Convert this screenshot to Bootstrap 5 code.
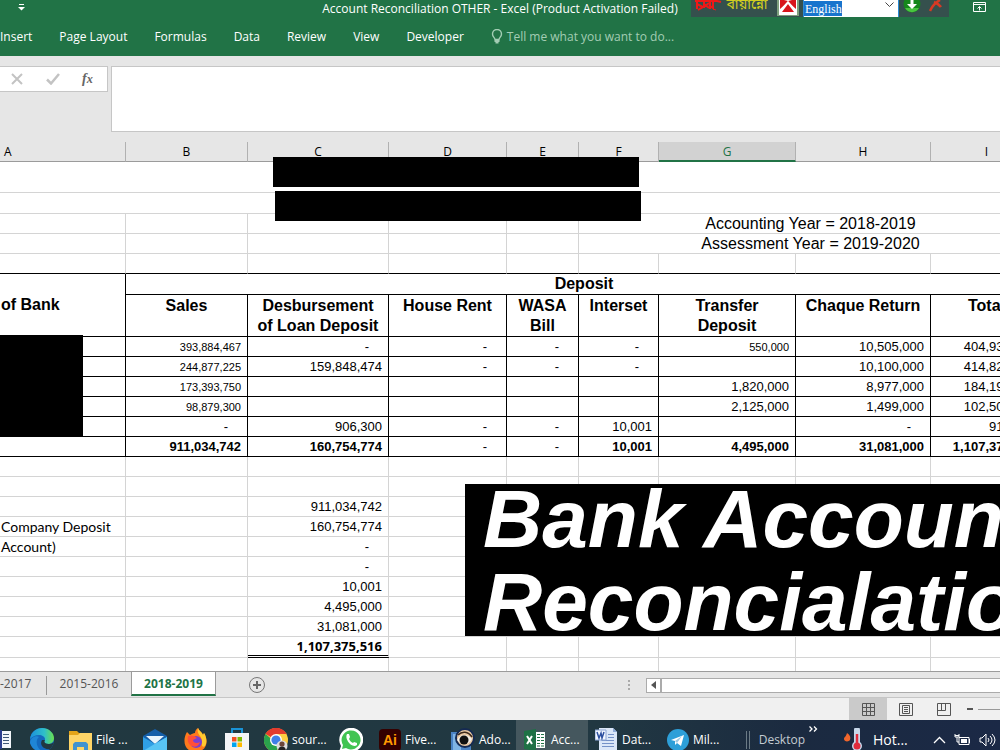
<!DOCTYPE html>
<html lang="en">
<head>
<meta charset="utf-8">
<meta name="viewport" content="width=device-width, initial-scale=1">
<title>Account Reconciliation OTHER - Excel</title>
<link href="https://cdn.jsdelivr.net/npm/bootstrap@5.3.0/dist/css/bootstrap.min.css" rel="stylesheet">
<style>
  body { font-family: "Open Sans", "Noto Sans", sans-serif; font-size: 12px; line-height: 16px; color: #000; background: #e6e6e6; }
  button { border: 0; background: none; padding: 0; color: inherit; }
  svg { display: block; flex: none; }

  /* title bar and ribbon */
  .ribbon { background: #217346; color: #fff; }
  .titlebar { height: 18px; line-height: 18px; }
  .qat { left: 18px; top: 3px; }
  .winbtn { right: 14px; top: 2px; }
  .tabs-row { height: 38px; gap: 27px; }
  .tabs-row a { color: #fff; text-decoration: none; white-space: nowrap; }
  .tabs-row a.tellme { color: #a3cdb4; }
  .langbar { right: 51px; top: 0; width: 258px; height: 17px; background: #35504d; overflow: hidden; }
  .lang-name { color: #d3cf1f; font-family: "Noto Sans Bengali", "Noto Sans", sans-serif; font-size: 14px; line-height: 12px; width: 44px; white-space: nowrap; }
  .lang-select { appearance: none; width: 96px; height: 22px; margin-top: -7px; border: 1px solid #2a8ad4; border-radius: 0; padding: 0 1px; color: #fff;
    font: 12px/18px "Liberation Serif", serif; background: linear-gradient(#1874cd, #1874cd) 0 2px / 38px 15px no-repeat #fff; }
  .lang-arrow { right: 5px; top: 2px; }

  /* formula bar */
  .formula-area { padding: 10px 0; gap: 3px; height: 86px; }
  .fx-box { width: 108px; height: 26px; background: #fff; border: 1px solid #c6c6c6; border-left: 0; padding-left: 10px; gap: 22px; }
  .fx-input { height: 66px; border: 1px solid #c6c6c6; border-right: 0; resize: none; background: #fff; }
  .fx-label { font: italic bold 14px/16px "Liberation Serif", serif; color: #666; }

  /* worksheet */
  .sheet { background: #fff; }
  .ledger { table-layout: fixed; width: 100%; min-width: 1142px; border-collapse: separate; border-spacing: 0; font-family: "Liberation Sans", Arial, sans-serif; font-size: 13px; line-height: 16px; }
  .ledger td, .ledger tbody th { border-right: 1px solid #d4d4d4; border-bottom: 1px solid #d4d4d4; padding: 0 6px; height: 20px; white-space: nowrap; overflow: hidden; }
  .ledger thead th { height: 20px; padding: 1px 0 0; background: #e6e6e6; border-right: 1px solid #b1b1b1; border-bottom: 1px solid #9b9b9b; font: 12px/16px "Open Sans", "Noto Sans", sans-serif; text-align: center; }
  .ledger thead th.picked { background: #d2d2d2; color: #217346; border-bottom: 2px solid #217346; }
  .ledger .boxed > * { border-color: #000; }
  .ledger .boxed > .outside { border-color: #d4d4d4; }
  .ledger .topline > * { border-bottom-color: #000; }
  .ledger tbody th { font-size: 16px; line-height: 20px; text-align: center; vertical-align: top; padding: 0 4px; white-space: normal; }
  .ledger tbody th.bank { text-align: left; vertical-align: middle; padding-left: 1px; }
  .ledger .r42 > th { padding-top: 1px; }
  .ledger .fine { font-size: 11px; }
  .ledger .nil { padding-right: 19px; }
  .ledger .year { font-size: 16px; line-height: 18px; padding-top: 1px; text-align: center; }
  .ledger .note { font: 14px/18px Lato, sans-serif; padding-left: 1px; }
  .ledger .grand { font: bold 13px/17px "Noto Sans", sans-serif; border-bottom: 3px double #000; }
  .ledger .r31 td { height: 31px; }
  .ledger .r21 > * { height: 21px; }
  .ledger .r42 > * { height: 42px; }
  .mask { background: #000; position: absolute; }
  .banner { left: 465px; right: 0; top: 342px; height: 152px; padding-left: 18px; color: #fff; overflow: hidden; white-space: nowrap; font: italic bold 82px/83px "Liberation Sans", Arial, sans-serif; }

  /* sheet tabs and status bar */
  .sheetbar { height: 28px; border-top: 1px solid #9b9b9b; border-bottom: 1px solid #c6c6c6; background: #e6e6e6; color: #555; }
  .sheetbar a { color: inherit; text-decoration: none; text-align: center; line-height: 24px; height: 24px; width: 84px; }
  .sheetbar a.cut { width: 46px; text-align: left; }
  .sheetbar a.on { width: 85px; background: #fff; color: #217346; font-weight: bold; border: 1px solid #9b9b9b; border-top: 0; border-bottom: 2px solid #217346; }
  .tab-sep { width: 1px; height: 19px; background: #999; }
  .hscroll { width: 354px; height: 15px; border: 1px solid #ababab; border-right: 0; background: #fff; margin-top: 6px; }
  .hscroll button { width: 15px; height: 13px; border-right: 2px solid #ababab; }
  .statusbar { height: 22px; background: #f0f0f0; }
  .statusbar button { width: 38px; height: 22px; }
  .statusbar .on { background: #cacaca; }
  .zoomer { appearance: none; width: 22px; height: 1px; background: #999; }
  .zoomer::-webkit-slider-thumb { appearance: none; width: 0; height: 0; }

  /* taskbar */
  .taskbar { height: 30px; background: linear-gradient(90deg, #213840, #213842 60%, #1b2a40 80%, #1b2946); color: #fff; overflow: hidden; }
  .taskbar button { height: 40px; display: flex; align-items: center; white-space: nowrap; flex: none; }
  .tb-icon { width: 41px; justify-content: center; }
  .tb-app { width: 72px; padding-left: 7px; gap: 4px; }
  .tb-app.on { background: #45575e; }
  .tb-desktop { color: #c5ccd2; }
  .taskbar .tb-desktop { padding-right: 4px; }
  .taskbar .tb-more { width: 34px; height: 18px; }
  .tb-weather { width: 90px; font-size: 14px; }
</style>
</head>
<body class="d-flex flex-column vh-100 overflow-hidden">

<header class="ribbon position-relative">
  <div class="titlebar text-center">
    <button class="qat position-absolute" aria-label="Customize Quick Access Toolbar">
      <svg width="7" height="8" viewBox="0 0 7 8"><path d="M1 1.500h5" stroke="#fff"/><path d="M0 4h7L3.500 7.500z" fill="#fff"/></svg>
    </button>
    Account Reconciliation OTHER - Excel (Product Activation Failed)
    <div class="langbar position-absolute d-flex align-items-start">
      <svg width="34" height="17" viewBox="0 0 34 17"><g fill="none" stroke="#f01818" stroke-width="2"><path d="M4 1h22l4 1M6 1v8M6 4l6 3-5 3M13 1v7M13 4l5 4M19 1v8M13 7l5-4M22 1v7l-4-3"/><path d="M22 9l3 1" stroke-width="1"/></g></svg>
      <span class="lang-name">বায়ান্নো</span>
      <button class="ms-2" aria-label="Keyboard layout"><svg width="22" height="17" viewBox="0 0 22 17"><path d="M0 0h22v16H0z" fill="#7da07d"/><path d="M2 0h18v15H2z" fill="#fff"/><path d="M3 0h4l4 1 4-1h4v9l-8-7-8 7z" fill="#d8151b"/><path d="M5 12l6-8 6 8z" fill="#d8151b"/><path d="M4 10l7-8 7 8" fill="none" stroke="#fff" stroke-width="1.500"/></svg></button>
      <div class="position-relative ms-1">
        <select class="lang-select" aria-label="Language"><option>English</option></select>
        <svg class="lang-arrow position-absolute" width="9" height="6" viewBox="0 0 9 6"><path d="M.5.5l4 4 4-4" fill="none" stroke="#444"/></svg>
      </div>
      <button class="ms-1" aria-label="Download"><svg width="18" height="14" viewBox="0 0 18 14"><circle cx="9" cy="4" r="8.500" fill="#16871c"/><path d="M2 8a8 8 0 0 0 14 0z" fill="#48c63e"/><path d="M7.500 0h3v4H14L9 9 4 4h3.500z" fill="#fff"/></svg></button>
      <button class="ms-2" aria-label="Close"><svg width="14" height="12" viewBox="0 0 14 12"><path d="M1 11Q4 4 11 0M5 2q5 2 7 5" fill="none" stroke="#d63a24" stroke-width="2.500"/></svg></button>
    </div>
    <button class="winbtn position-absolute" aria-label="Ribbon Display Options">
      <svg width="13" height="10" viewBox="0 0 13 10"><path d="M.5.5h12v9H.5zM.5 2.500h12M6.500 8.500v-4M4.500 6.500l2-2 2 2" fill="none" stroke="#fff"/></svg>
    </button>
  </div>
  <nav class="tabs-row d-flex align-items-center">
    <a href="#" class="ms-n1">Insert</a><a href="#">Page Layout</a><a href="#">Formulas</a><a href="#">Data</a><a href="#">Review</a><a href="#">View</a><a href="#">Developer</a>
    <a href="#" class="tellme d-flex align-items-center"><svg class="me-1" width="12" height="16" viewBox="0 0 12 16"><path d="M4 10.500C4 8.500 1.500 8 1.500 5a4.500 4.500 0 0 1 9 0c0 3-2.500 3.500-2.500 5.500z" fill="none" stroke="#a3cdb4" stroke-width="1.400"/><path d="M3.500 11h5v2h-1v1.500h-3V13h-1z" fill="#a3cdb4"/></svg>Tell me what you want to do...</a>
  </nav>
</header>

<section class="formula-area d-flex align-items-start">
  <div class="fx-box d-flex align-items-center">
    <button aria-label="Cancel"><svg width="14" height="12" viewBox="0 0 14 12"><path d="M2 1l10 10M12 1L2 11" stroke="#c3c3c3" stroke-width="2"/></svg></button>
    <button aria-label="Enter"><svg width="14" height="12" viewBox="0 0 14 12"><path d="M1 6.500l4 4L13 1" fill="none" stroke="#c3c3c3" stroke-width="2.500"/></svg></button>
    <button class="fx-label" aria-label="Insert Function">f<small>x</small></button>
  </div>
  <textarea class="fx-input flex-grow-1" aria-label="Formula"></textarea>
</section>

<main class="sheet flex-grow-1 position-relative overflow-hidden">
  <table class="ledger">
    <colgroup><col style="width:126px"><col style="width:122px"><col style="width:141px"><col style="width:118px"><col style="width:72px"><col style="width:80px"><col style="width:137px"><col style="width:135px"><col style="width:112px"><col></colgroup>
    <thead><tr><th class="text-start"><span class="ps-1 ms-n1">A</span></th><th>B</th><th>C</th><th>D</th><th>E</th><th>F</th><th class="picked">G</th><th>H</th><th>I</th><th></th></tr></thead>
    <tbody class="text-end">
      <tr class="r31"><td colspan="9"></td><td></td></tr>
      <tr class="r21"><td colspan="9"></td><td></td></tr>
      <tr><td></td><td></td><td></td><td></td><td></td><td colspan="4" class="year">Accounting Year = 2018-2019</td><td></td></tr>
      <tr><td></td><td></td><td></td><td></td><td></td><td colspan="4" class="year">Assessment Year = 2019-2020</td><td></td></tr>
      <tr class="topline"><td></td><td></td><td></td><td></td><td></td><td></td><td></td><td></td><td></td><td></td></tr>
      <tr class="boxed r21"><th rowspan="2" class="bank">of Bank</th><th colspan="8">Deposit</th><td class="outside"></td></tr>
      <tr class="boxed r42"><th>Sales</th><th>Desbursement<br>of Loan Deposit</th><th>House Rent</th><th>WASA<br>Bill</th><th>Interset</th><th>Transfer<br>Deposit</th><th>Chaque Return</th><th>Total</th><td class="outside"></td></tr>
      <tr class="boxed"><td></td><td class="fine">393,884,467</td><td class="nil">-</td><td class="nil">-</td><td class="nil">-</td><td class="nil">-</td><td class="fine">550,000</td><td>10,505,000</td><td>404,939,467</td><td class="outside"></td></tr>
      <tr class="boxed"><td></td><td class="fine">244,877,225</td><td>159,848,474</td><td class="nil">-</td><td class="nil">-</td><td class="nil">-</td><td></td><td>10,100,000</td><td>414,825,699</td><td class="outside"></td></tr>
      <tr class="boxed"><td></td><td class="fine">173,393,750</td><td></td><td></td><td></td><td></td><td>1,820,000</td><td>8,977,000</td><td>184,190,750</td><td class="outside"></td></tr>
      <tr class="boxed"><td></td><td class="fine">98,879,300</td><td></td><td></td><td></td><td></td><td>2,125,000</td><td>1,499,000</td><td>102,503,300</td><td class="outside"></td></tr>
      <tr class="boxed"><td></td><td class="nil">-</td><td>906,300</td><td class="nil">-</td><td class="nil">-</td><td>10,001</td><td></td><td class="nil">-</td><td>916,301</td><td class="outside"></td></tr>
      <tr class="boxed fw-bold"><td></td><td>911,034,742</td><td>160,754,774</td><td class="nil fw-normal">-</td><td class="nil fw-normal">-</td><td>10,001</td><td>4,495,000</td><td>31,081,000</td><td>1,107,375,516</td><td class="outside"></td></tr>
      <tr><td></td><td></td><td></td><td></td><td></td><td></td><td></td><td></td><td></td><td></td></tr>
      <tr><td></td><td></td><td></td><td></td><td></td><td></td><td></td><td></td><td></td><td></td></tr>
      <tr><td></td><td></td><td>911,034,742</td><td></td><td></td><td></td><td></td><td></td><td></td><td></td></tr>
      <tr><td class="note text-start">Company Deposit</td><td></td><td>160,754,774</td><td></td><td></td><td></td><td></td><td></td><td></td><td></td></tr>
      <tr><td class="note text-start">Account)</td><td></td><td class="nil">-</td><td></td><td></td><td></td><td></td><td></td><td></td><td></td></tr>
      <tr><td></td><td></td><td class="nil">-</td><td></td><td></td><td></td><td></td><td></td><td></td><td></td></tr>
      <tr><td></td><td></td><td>10,001</td><td></td><td></td><td></td><td></td><td></td><td></td><td></td></tr>
      <tr><td></td><td></td><td>4,495,000</td><td></td><td></td><td></td><td></td><td></td><td></td><td></td></tr>
      <tr><td></td><td></td><td>31,081,000</td><td></td><td></td><td></td><td></td><td></td><td></td><td></td></tr>
      <tr class="r21"><td></td><td></td><td class="grand">1,107,375,516</td><td></td><td></td><td></td><td></td><td></td><td></td><td></td></tr>
      <tr><td></td><td></td><td></td><td></td><td></td><td></td><td></td><td></td><td></td><td></td></tr>
    </tbody>
  </table>
  <div class="mask" style="left:273px;top:15px;width:366px;height:30px"></div>
  <div class="mask" style="left:275px;top:49px;width:366px;height:30px"></div>
  <div class="mask" style="left:0;top:193px;width:83px;height:102px"></div>
  <div class="mask banner d-flex align-items-center"><div>Bank Account<br>Reconcialation</div></div>
</main>

<div class="sheetbar d-flex align-items-start">
  <a href="#" class="cut">-2017</a>
  <span class="tab-sep mt-1"></span>
  <a href="#">2015-2016</a>
  <a href="#" class="on">2018-2019</a>
  <button class="ms-4 ps-2 pt-1" aria-label="New sheet"><svg width="18" height="18" viewBox="0 0 18 18"><circle cx="9" cy="9" r="7.500" fill="none" stroke="#777"/><path d="M9 5v8M5 9h8" stroke="#666" stroke-width="2"/></svg></button>
  <svg class="ms-auto me-3 mt-2" width="2" height="12" viewBox="0 0 2 12"><path d="M0 0h2v2H0zM0 4h2v2H0zM0 8h2v2H0z" fill="#aaa"/></svg>
  <div class="hscroll"><button class="d-flex align-items-center justify-content-center" aria-label="Scroll left"><svg width="5" height="8" viewBox="0 0 5 8"><path d="M5 0v8L0 4z" fill="#555"/></svg></button></div>
</div>

<div class="statusbar d-flex align-items-center justify-content-end">
  <button class="on d-flex align-items-center justify-content-center" aria-label="Normal view"><svg width="13" height="13" viewBox="0 0 13 13"><path d="M.5.5h12v12H.5zM4.500.5v12M8.500.5v12M.5 4.500h12M.5 8.500h12" fill="none" stroke="#555"/></svg></button>
  <button class="d-flex align-items-center justify-content-center" aria-label="Page layout view"><svg width="14" height="13" viewBox="0 0 14 13"><path d="M.5.5h13v12H.5zM3.500 2.500h7v8h-7zM5 4.500h4M5 6.500h4M5 8.500h4" fill="none" stroke="#555"/></svg></button>
  <button class="d-flex align-items-center justify-content-center" aria-label="Page break view"><svg width="14" height="13" viewBox="0 0 14 13"><path d="M.5.5h13v12H.5zM.5 7.500h8V.5M4.500.5v7" fill="none" stroke="#555"/></svg></button>
  <svg class="ms-1 me-1" width="7" height="2" viewBox="0 0 7 2"><path d="M0 0h6v2H0z" fill="#555"/></svg>
  <input type="range" class="zoomer" aria-label="Zoom">
</div>

<footer class="taskbar d-flex align-items-start">
  <button style="width:21px" aria-label="Document"><svg width="11" height="24" viewBox="0 0 11 24"><path d="M0 3h11v17H0z" fill="#f3f6fb"/><path d="M0 2h2v19H0z" fill="#2c3f8f"/><path d="M3 6.500h6M3 9.500h6M3 12.500h6M3 15.500h6" stroke="#3f5878"/></svg></button>
  <button class="tb-icon" aria-label="Edge"><svg width="24" height="24" viewBox="0 0 24 24"><defs><linearGradient id="eg"><stop stop-color="#1b8fdc"/><stop offset=".6" stop-color="#2fc0c9"/><stop offset="1" stop-color="#6be04c"/></linearGradient></defs><circle cx="12" cy="12" r="12" fill="#1469bd"/><path d="M0 11C1 4 6 0 12 0c7 0 12 5 12 10 0 4-3 6-6 6-3 0-4-1-4-2 0-1 1-1 1-3 0-2-3-4-6-4-4 0-7 2-9 4z" fill="url(#eg)"/><path d="M15 12c-1 1-1 4 4 4 2 0 4-1 5-2-1 3-2 5-4 7-6 1-11-4-8-9z" fill="#213840"/><path d="M9 9c-4 3-3 11 4 15-6 0-11-3-13-9 0-5 6-8 9-6z" fill="#1f86d6"/></svg></button>
  <button class="tb-app"><svg width="23" height="24" viewBox="0 0 23 24"><path d="M0 3h8l2 2h13v17H0z" fill="#e5a519"/><path d="M0 7h9l2-2h12v17H0z" fill="#ffd567"/><path d="M4 22v-6l2-2h11l2 2v6h-4v-3H8v3z" fill="#4293cf"/></svg>File ...</button>
  <button class="tb-icon" aria-label="Mail"><svg width="24" height="24" viewBox="0 0 24 24"><path d="M0 8l12-7 12 7v15H0z" fill="#155fa9"/><path d="M3 8h18l-9 8z" fill="#e9f5fc"/><path d="M0 9l12 7 12-7v14H0z" fill="#2f9fe5"/><path d="M0 23l15-9 9-5v14z" fill="#58c4f4"/></svg></button>
  <button class="tb-icon" aria-label="Firefox"><svg width="24" height="24" viewBox="0 0 24 24"><path d="M3 4l3 3c2-1 3-2 5-2 0-2 1-4 3-5 1 3 4 4 5 7l1-2c5 8 3 18-8 19C0 24-2 12 3 4z" fill="#ff7a1c"/><path d="M14 0c1 3 4 4 5 7l1-2c3 5 3 10 1 13-2 2-4 0-3-5 0-5-6-7-4-13z" fill="#ffca2f"/><circle cx="12" cy="14" r="6" fill="#7a3fd1"/><path d="M4 8c3-1 6-1 9 2l-4 2c0 3 4 4 7 2-1 5-7 6-10 3-2-2-3-5-2-9z" fill="#ff4e3a"/></svg></button>
  <button class="tb-icon" aria-label="Store"><svg width="24" height="24" viewBox="0 0 24 24"><path d="M7 6V1h10v5" fill="none" stroke="#1a93d6" stroke-width="2"/><path d="M0 5h24v17l-2 2H2l-2-2z" fill="#f3f4f6"/><path d="M7 9h4.500v4.500H7z" fill="#f25022"/><path d="M12.500 9H17v4.500h-4.500z" fill="#7fba00"/><path d="M7 14.500h4.500V19H7z" fill="#00a4ef"/><path d="M12.500 14.500H17V19h-4.500z" fill="#ffb900"/></svg></button>
  <button class="tb-app"><svg width="24" height="24" viewBox="0 0 24 24"><circle cx="12" cy="12" r="12" fill="#ffcd41"/><path d="M12 12L1.600 6A12 12 0 0 1 22.400 6z" fill="#e33b2e"/><path d="M1.600 6A12 12 0 0 0 12 24l5-9h-5z" fill="#2aa24c"/><path d="M12 6h10.400L17 15z" fill="#ffcd41"/><path d="M1.600 6A12 12 0 0 1 22.400 6H12z" fill="#e33b2e"/><circle cx="12" cy="12" r="6" fill="#fff"/><circle cx="12" cy="12" r="4.600" fill="#3f7fe8"/><circle cx="18" cy="18" r="5.500" fill="#ddd"/><circle cx="18" cy="16" r="2.600" fill="#6b4538"/><path d="M14 23c0-6 8-6 8 0z" fill="#222"/></svg>sour...</button>
  <button class="tb-icon" style="width:43px" aria-label="WhatsApp"><svg width="24" height="24" viewBox="0 0 24 24"><path d="M0 24l2-6A12 12 0 1 1 6 22z" fill="#fff"/><path d="M3 21l1-4A9.500 9.500 0 1 1 7 20z" fill="#41c452"/><path d="M8 6l2 0 1 3-1 2c1 2 2 3 4 4l1-1 3 1v2c-5 4-13-6-10-11z" fill="#fff"/></svg></button>
  <button class="tb-app"><svg width="22" height="22" viewBox="0 0 22 22"><rect width="22" height="22" rx="4" fill="#330000"/><text x="4" y="16" font-family="Liberation Sans" font-weight="bold" font-size="14" fill="#ff9a00">Ai</text></svg>Five...</button>
  <button class="tb-app"><svg width="24" height="24" viewBox="0 0 24 24"><path d="M0 4h20v20H0z" fill="#4b83c4"/><path d="M2 6h8v18H2z" fill="#7fb4e4"/><circle cx="14" cy="10" r="9" fill="#e9c9a4" stroke="#152a52" stroke-width="2"/><path d="M6 12c3-6 10-7 15-1-3 6-10 7-15 1z" fill="#f4f0e8"/><circle cx="13" cy="12" r="4.500" fill="#111"/><path d="M7 7c4-4 10-4 14 2" fill="none" stroke="#3d2a1c" stroke-width="1.500"/></svg>Ado...</button>
  <button class="tb-app on"><svg width="24" height="22" viewBox="0 0 24 22"><path d="M13 3h9v16h-9z" fill="#fff"/><path d="M14 5.500h3M18 5.500h3M14 8.500h3M18 8.500h3M14 11.500h3M18 11.500h3M14 14.500h3M18 14.500h3M14 17h3M18 17h3" stroke="#217346"/><path d="M1 2l12-2v22L1 20z" fill="#1e7145"/><path d="M4 7l5 8M9 7l-5 8" stroke="#fff" stroke-width="2"/></svg>Acc...</button>
  <button class="tb-app"><svg width="23" height="24" viewBox="0 0 23 24"><path d="M4 0h14l4 4v20H4z" fill="#dbe7f8"/><path d="M18 0v4h4z" fill="#8eabd8"/><path d="M7 12.500h12M7 15.500h12M7 18.500h12M13 6.500h6M13 9.500h6" stroke="#7592c8"/><path d="M0 2h11v10H0z" fill="#f3f7ff" stroke="#8ba4d3"/><path d="M2 4l2 6 2-5 1 5 2-6" fill="none" stroke="#2d50a0" stroke-width="1.500"/></svg>Dat...</button>
  <button class="tb-app"><svg width="22" height="22" viewBox="0 0 22 22"><circle cx="11" cy="11" r="11" fill="#2d9fd8"/><path d="M4 11l13-5-3 11-4-3-2 2v-4z" fill="#fff"/><path d="M8 12l7-5-5 7z" fill="#9dc9e2"/></svg>Mil...</button>
  <button class="tb-desktop ms-auto" aria-label="Desktop toolbar"><svg class="me-2" width="5" height="18" viewBox="0 0 5 18"><path d="M.5 0v18M3.500 0v18" stroke="#6b7b86"/></svg>Desktop</button>
  <button class="tb-more" aria-label="More"><svg width="9" height="6" viewBox="0 0 9 6"><path d="M.5.5L3 3 .5 5.500M5 .5L7.500 3 5 5.500" fill="none" stroke="#fff" stroke-width="1.300"/></svg></button>
  <button class="tb-weather"><svg class="me-2" width="22" height="24" viewBox="0 0 22 24"><path d="M4 5c3 2 4 4 3 7-1 2-6 2-6-1 0-2 2-2 3-6z" fill="#f1662c"/><path d="M11 2a3 3 0 0 1 6 0v12a5 5 0 1 1-6 0z" fill="#c8d7ea"/><circle cx="14" cy="18" r="3.500" fill="#e02b3c"/><path d="M14 6v12" stroke="#e02b3c" stroke-width="2.500"/></svg>Hot...</button>
  <button class="me-2" aria-label="Show hidden icons"><svg width="13" height="8" viewBox="0 0 13 8"><path d="M1 7l5.500-5.500L12 7" fill="none" stroke="#fff" stroke-width="1.300"/></svg></button>
  <button class="me-2" aria-label="Battery"><svg width="17" height="14" viewBox="0 0 17 14"><path d="M5 4.500h10v7H5zM15.500 6v4" fill="none" stroke="#fff"/><path d="M7 6h6v4H7z" fill="#fff"/><path d="M1 1v3h4V1M3 4v5h2M1 2.500h4" fill="none" stroke="#fff"/></svg></button>
  <button class="me-1" aria-label="Volume"><svg width="17" height="14" viewBox="0 0 17 14"><path d="M1 5h2l4-4v12L3 9H1zM9 5q2 2 0 4M11 3q4 4 0 8M13 1q6 6 0 12" fill="none" stroke="#fff"/></svg></button>
</footer>
<script src="https://cdn.jsdelivr.net/npm/bootstrap@5.3.0/dist/js/bootstrap.bundle.min.js"></script>
</body>
</html>
